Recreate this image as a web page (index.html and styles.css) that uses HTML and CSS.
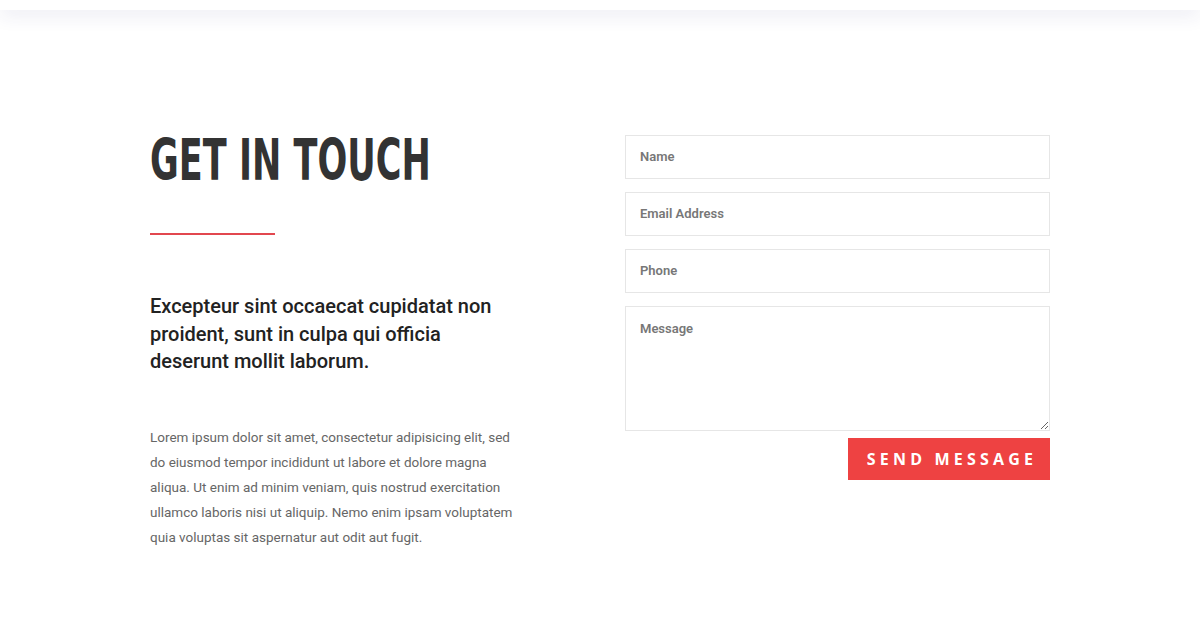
FILE: index.html
```html
<!DOCTYPE html>
<html lang="en">
<head>
<meta charset="utf-8">
<title>Get in touch</title>
<link rel="stylesheet" href="styles.css">
</head>
<body>
<header class="topbar"></header>
<main class="contact">
  <div class="contact-info">
    <h1 class="title"><span class="title-text">GET IN TOUCH</span></h1>
    <div class="rule"></div>
    <p class="lead">Excepteur sint occaecat cupidatat non proident, sunt in culpa qui officia deserunt mollit laborum.</p>
    <p class="body-text">Lorem ipsum dolor sit amet, consectetur adipisicing elit, sed do eiusmod tempor incididunt ut labore et dolore magna aliqua. Ut enim ad minim veniam, quis nostrud exercitation ullamco laboris nisi ut aliquip. Nemo enim ipsam voluptatem quia voluptas sit aspernatur aut odit aut fugit.</p>
  </div>
  <form class="contact-form">
    <input class="field" type="text" placeholder="Name">
    <input class="field" type="email" placeholder="Email Address">
    <input class="field" type="tel" placeholder="Phone">
    <textarea class="field area" placeholder="Message"></textarea>
    <button class="send" type="button">SEND MESSAGE</button>
  </form>
</main>
</body>
</html>
```
FILE: styles.css
```css
* { box-sizing: border-box; }
html, body { margin: 0; padding: 0; background: #fff; }
body { font-family: Roboto, "Liberation Sans", sans-serif; width: 1200px; height: 628px; overflow: hidden; }
.topbar {
  height: 10px;
  background: #fff;
  box-shadow: 0 3px 20px rgba(40, 40, 120, 0.14);
  position: relative;
  z-index: 2;
}
.contact {
  display: grid;
  grid-template-columns: 375px 425px;
  column-gap: 100px;
  padding: 125px 0 0 150px;
}
.contact-info { display: flex; flex-direction: column; }
.title {
  margin: 0;
  font-family: "DejaVu Sans Condensed", "DejaVu Sans", sans-serif;
  font-weight: 700;
  font-size: 57px;
  line-height: 50px;
  color: #333;
  white-space: nowrap;
}
.title-text {
  display: inline-block;
  transform: scaleX(0.684);
  transform-origin: left center;
}
.rule {
  width: 125px;
  height: 2px;
  background: #e2474f;
  margin-top: 48px;
}
.lead {
  margin: 58px 0 0;
  max-width: 360px;
  font-size: 20px;
  font-weight: 500;
  line-height: 27.5px;
  color: #222;
}
.body-text {
  margin: 49px 0 0;
  font-size: 13.5px;
  line-height: 25px;
  color: #666;
}
.contact-form { display: flex; flex-direction: column; }
.field {
  display: block;
  width: 425px;
  height: 44px;
  margin: 0 0 13px;
  border: 1px solid #e6e6e6;
  padding: 0 14px 1px;
  font-family: Roboto, "Liberation Sans", sans-serif;
  font-size: 13px;
  font-weight: 500;
  color: #333;
  background: #fff;
  outline: none;
}
.field::placeholder { color: #777; font-weight: 600; }
.area { height: 125px; padding-top: 14px; margin-bottom: 7px; resize: vertical; }
.send {
  align-self: flex-end;
  width: 202px;
  height: 42px;
  border: 0;
  background: #ee4242;
  color: #fff;
  font-family: "Open Sans", "Liberation Sans", sans-serif;
  font-weight: 700;
  font-size: 16px;
  letter-spacing: 4.2px;
  padding: 0 0 0 6px;
}
```
